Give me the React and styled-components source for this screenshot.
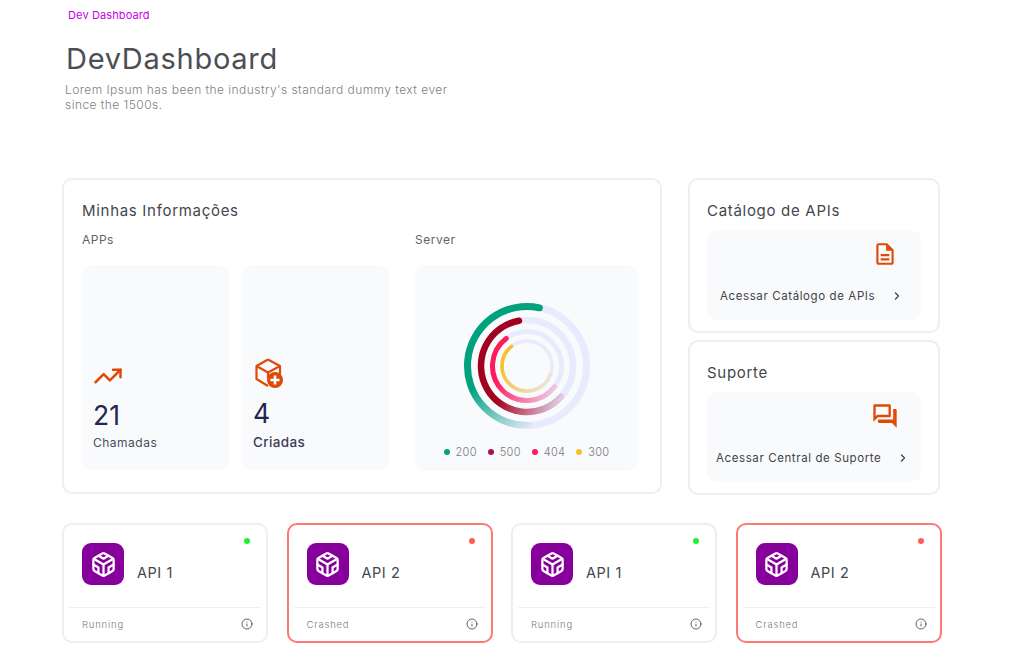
import React from "react";
import styled, { createGlobalStyle } from "styled-components";
import { ChevronRight, Codesandbox, Info, TrendingUp } from "lucide-react";
import { MdOutlineDescription, MdOutlineForum } from "react-icons/md";

const Global = createGlobalStyle`
  html, body { margin: 0; padding: 0; background: #fff; }
  body { font-family: Inter, "Open Sans", "Liberation Sans", sans-serif; color: #43474d; }
  * { box-sizing: border-box; }
`;

const Page = styled.main`
  width: 1022px;
  height: 666px;
  overflow: hidden;
  padding: 8px 0 0 62px;
`;
const Breadcrumb = styled.div`
  margin-left: 6px;
  font-size: 11px;
  line-height: 14px;
  letter-spacing: 0.12px;
  color: #c400e4;
`;
const Heading = styled.h1`
  margin: 18px 0 0 4px;
  font-size: 29px;
  line-height: 38px;
  font-weight: 400;
  letter-spacing: 0.72px;
  color: #4b4e54;
`;
const Lead = styled.p`
  width: 395px;
  margin: 4px 0 0 3px;
  font-size: 12px;
  line-height: 15px;
  letter-spacing: 0.45px;
  font-weight: 300;
  color: #7c7f84;
`;
const Main = styled.section`
  display: flex;
  gap: 25.5px;
  margin-top: 66px;
`;
const Card = styled.div`
  background: #fff;
  border: 2px solid #eeeeee;
  border-radius: 10px;
`;
const InfoCard = styled(Card)`
  width: 600px;
  height: 316px;
  padding: 21px 21px 22px 18px;
`;
const CardTitle = styled.h2`
  margin: 0;
  font-size: 15px;
  line-height: 20px;
  font-weight: 400;
  letter-spacing: 0.7px;
  color: #43474d;
`;
const Columns = styled.div`
  display: flex;
  gap: 26px;
  margin-top: 12px;
`;
const Column = styled.div`
  display: flex;
  flex-direction: column;
  gap: 18px;
`;
const Label = styled.div`
  font-size: 12px;
  line-height: 14px;
  letter-spacing: 0.5px;
  color: #5f6368;
`;
const Tiles = styled.div`
  display: flex;
  gap: 13px;
`;
const Tile = styled.div`
  background: #f9fafc;
  border-radius: 10px;
`;
const StatTile = styled(Tile)`
  width: 147px;
  height: 205px;
  padding: 0 11px;
  display: flex;
  flex-direction: column;
  justify-content: flex-end;
`;
const StatIcon = styled.div`
  height: 34px;
  display: flex;
  align-items: center;
  color: #e04a08;
`;
const StatValue = styled.div`
  margin-top: ${p => (p.$strong ? "6px" : "5px")};
  font-size: 26.5px;
  line-height: 34px;
  font-weight: 400;
  color: #25264f;
`;
const StatLabel = styled.div`
  margin-top: ${p => (p.$strong ? "4px" : "3px")};
  margin-bottom: ${p => (p.$strong ? "20px" : "19px")};
  font-size: ${p => (p.$strong ? "13.5px" : "12px")};
  line-height: 16px;
  letter-spacing: ${p => (p.$strong ? "0.35px" : "0.5px")};
  font-weight: ${p => (p.$strong ? 500 : 400)};
  color: ${p => (p.$strong ? "#3a3c5c" : "#4a4c5c")};
`;
const ServerTile = styled(Tile)`
  width: 223px;
  height: 206px;
  padding-top: 35px;
  display: flex;
  flex-direction: column;
  align-items: center;
`;
const Legend = styled.div`
  display: flex;
  gap: 11px;
  margin-top: 13px;
`;
const LegendItem = styled.div`
  display: flex;
  align-items: center;
  gap: 6px;
  font-size: 11px;
  line-height: 14px;
  font-weight: 300;
  letter-spacing: 0.3px;
  color: #77797e;
`;
const Dot = styled.span`
  width: 6px;
  height: 6px;
  border-radius: 50%;
  background: ${p => p.$color};
`;
const Side = styled.div`
  display: flex;
  flex-direction: column;
  gap: 7px;
  width: 252px;
`;
const LinkCard = styled(Card)`
  height: 155px;
  padding: 21px 17px 0 17.5px;
`;
const LinkTile = styled(Tile)`
  height: 90px;
  margin-top: 9px;
  padding: ${p => (p.$wide ? "12px 12px 0 9px" : "12px 18px 0 13px")};
  display: flex;
  flex-direction: column;
`;
const LinkIcon = styled.div`
  height: 26px;
  margin-top: ${p => p.$lift};
  display: flex;
  justify-content: flex-end;
  color: #e04a08;
  padding-right: ${p => p.$offset};
`;
const LinkRow = styled.div`
  display: flex;
  align-items: center;
  justify-content: space-between;
  margin-top: ${p => p.$gap};
  font-size: 11.5px;
  line-height: 16px;
  letter-spacing: 0.6px;
  color: #3f4248;
`;
const ApiRow = styled.section`
  display: flex;
  gap: 18.5px;
  margin-top: 28px;
`;
const ApiCard = styled(Card)`
  position: relative;
  width: 206px;
  height: 120px;
  border-color: ${p => (p.$crashed ? "#ff7873" : "#eeeeee")};
  display: flex;
  flex-direction: column;
  padding: 0 5px;
`;
const ApiBody = styled.div`
  height: 83px;
  padding: 18px 0 0 13px;
  display: flex;
  gap: 13px;
  border-bottom: 1px solid #f0f0f0;
`;
const ApiLogo = styled.div`
  width: 42px;
  height: 42px;
  border-radius: 9px;
  background: #86009c;
  color: #fff;
  display: flex;
  align-items: center;
  justify-content: center;
`;
const ApiName = styled.div`
  margin-top: 20px;
  font-size: 14.5px;
  line-height: 20px;
  letter-spacing: 0.55px;
  color: #43474d;
`;
const StatusDot = styled.span`
  position: absolute;
  top: 13px;
  right: 16px;
  width: 6px;
  height: 6px;
  border-radius: 50%;
  background: ${p => (p.$crashed ? "#ff5c57" : "#22f02c")};
`;
const ApiFooter = styled.div`
  flex: 1;
  display: flex;
  align-items: center;
  justify-content: space-between;
  padding: 0 8px 1px 13px;
  font-size: 9.5px;
  font-weight: 300;
  letter-spacing: 0.8px;
  color: #7a7d82;
`;
const FooterInfo = styled.span`
  display: flex;
  color: #3b3e43;
`;

function arcPath(r, startDeg, endDeg) {
  // Angles measured clockwise from 12 o'clock; the arc is drawn counter-clockwise.
  const pt = a => {
    const t = (a * Math.PI) / 180;
    return [(66 + r * Math.sin(t)).toFixed(2), (66 - r * Math.cos(t)).toFixed(2)];
  };
  const [x1, y1] = pt(startDeg);
  const [x2, y2] = pt(endDeg);
  const large = Math.abs(startDeg - endDeg) > 180 ? 1 : 0;
  return `M ${x1} ${y1} A ${r} ${r} 0 ${large} 0 ${x2} ${y2}`;
}

const ringData = [
  { r: 59.5, w: 7, color: "#00a27e", start: 12, end: -182, x1: 30, y1: 75, x2: 70, y2: 130 },
  { r: 46, w: 6.5, color: "#a3001f", start: -10, end: -228, x1: 42, y1: 84, x2: 106, y2: 108 },
  { r: 34.5, w: 5, color: "#ff1a5b", start: -37, end: -233, x1: 38, y1: 72, x2: 102, y2: 100 },
  { r: 25, w: 3.6, color: "#f8bf30", start: -38, end: -250, x1: 42, y1: 66, x2: 92, y2: 92 },
];

function RingChart() {
  return (
    <svg width="132" height="132" viewBox="0 0 132 132" aria-hidden="true">
      <defs>
        {ringData.map((ring, i) => (
          <linearGradient key={i} id={`ring${i}`} gradientUnits="userSpaceOnUse" x1={ring.x1} y1={ring.y1} x2={ring.x2} y2={ring.y2}>
            <stop offset="0" stopColor={ring.color} />
            <stop offset="1" stopColor={ring.color} stopOpacity="0" />
          </linearGradient>
        ))}
      </defs>
      {ringData.map((ring, i) => (
        <g key={i} fill="none">
          <circle cx="66" cy="66" r={ring.r} stroke="#e8ebfd" strokeWidth={ring.w} />
          <path d={arcPath(ring.r, ring.start, ring.end)} stroke={`url(#ring${i})`} strokeWidth={ring.w} strokeLinecap="round" />
        </g>
      ))}
    </svg>
  );
}

function BoxPlus() {
  return (
    <svg width="32" height="32" viewBox="0 0 32 32" fill="none">
      <path d="M15 2.5 L27 9 V17 M15 2.5 L3.5 9 V22 L15 29 M3.5 9 L15 15.5 L27 9 M15 15.5 V21" stroke="#e04a08" strokeWidth="2.2" strokeLinejoin="round" />
      <circle cx="22" cy="23" r="8" fill="#e04a08" />
      <path d="M22 18.5 V27.5 M17.5 23 H26.5" stroke="#fff" strokeWidth="2.6" />
    </svg>
  );
}

const legend = [
  ["200", "#00a27e"],
  ["500", "#ad1246"],
  ["404", "#ff1a5b"],
  ["300", "#f8bf30"],
];

function ApiItem({ name, crashed }) {
  return (
    <ApiCard $crashed={crashed}>
      <StatusDot $crashed={crashed} />
      <ApiBody>
        <ApiLogo><Codesandbox size={27} strokeWidth={2} /></ApiLogo>
        <ApiName>{name}</ApiName>
      </ApiBody>
      <ApiFooter>
        {crashed ? "Crashed" : "Running"}
        <FooterInfo><Info size={12} strokeWidth={1.6} /></FooterInfo>
      </ApiFooter>
    </ApiCard>
  );
}

export default function App() {
  return (
    <Page>
      <Global />
      <Breadcrumb>Dev Dashboard</Breadcrumb>
      <Heading>DevDashboard</Heading>
      <Lead>Lorem Ipsum has been the industry's standard dummy text ever since the 1500s.</Lead>
      <Main>
        <InfoCard>
          <CardTitle>Minhas Informações</CardTitle>
          <Columns>
            <Column>
              <Label>APPs</Label>
              <Tiles>
                <StatTile>
                  <StatIcon><TrendingUp size={30} strokeWidth={2} /></StatIcon>
                  <StatValue>21</StatValue>
                  <StatLabel>Chamadas</StatLabel>
                </StatTile>
                <StatTile>
                  <StatIcon><BoxPlus /></StatIcon>
                  <StatValue $strong>4</StatValue>
                  <StatLabel $strong>Criadas</StatLabel>
                </StatTile>
              </Tiles>
            </Column>
            <Column>
              <Label>Server</Label>
              <ServerTile>
                <RingChart />
                <Legend>
                  {legend.map(([label, color]) => (
                    <LegendItem key={label}><Dot $color={color} />{label}</LegendItem>
                  ))}
                </Legend>
              </ServerTile>
            </Column>
          </Columns>
        </InfoCard>
        <Side>
          <LinkCard>
            <CardTitle>Catálogo de APIs</CardTitle>
            <LinkTile>
              <LinkIcon $offset="5px" $lift="-1px"><MdOutlineDescription size={26} /></LinkIcon>
              <LinkRow $gap="21px">Acessar Catálogo de APIs<ChevronRight size={12} strokeWidth={2.5} /></LinkRow>
            </LinkTile>
          </LinkCard>
          <LinkCard>
            <CardTitle>Suporte</CardTitle>
            <LinkTile $wide>
              <LinkIcon $offset="10px" $lift="-2px"><MdOutlineForum size={28} /></LinkIcon>
              <LinkRow $gap="22px">Acessar Central de Suporte<ChevronRight size={12} strokeWidth={2.5} /></LinkRow>
            </LinkTile>
          </LinkCard>
        </Side>
      </Main>
      <ApiRow>
        <ApiItem name="API 1" />
        <ApiItem name="API 2" crashed />
        <ApiItem name="API 1" />
        <ApiItem name="API 2" crashed />
      </ApiRow>
    </Page>
  );
}
